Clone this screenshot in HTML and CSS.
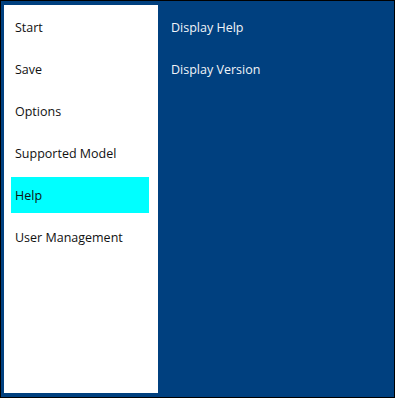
FILE: index.html
```html
<!DOCTYPE html>
<html>
<head>
<meta charset="utf-8">
<link rel="stylesheet" href="styles.css">
</head>
<body>
<div class="frame">
  <nav class="sidebar">
    <div class="item">Start</div>
    <div class="item">Save</div>
    <div class="item">Options</div>
    <div class="item">Supported Model</div>
    <div class="item active">Help</div>
    <div class="item">User Management</div>
  </nav>
  <main class="content">
    <div class="item">Display Help</div>
    <div class="item">Display Version</div>
  </main>
</div>
</body>
</html>
```
FILE: styles.css
```css
html, body {
  margin: 0;
  padding: 0;
}
body {
  font-family: "Open Sans", "Noto Sans", sans-serif;
  font-size: 12.5px;
}
.frame {
  box-sizing: border-box;
  width: 395px;
  height: 398px;
  border: 1px solid #000;
  background: #00407f;
  padding: 4px 0 4px 3px;
  display: flex;
}
.sidebar {
  box-sizing: border-box;
  width: 154px;
  background: #fff;
  padding: 4px 9px 0 7px;
  display: flex;
  flex-direction: column;
  gap: 6px;
  color: #111;
}
.content {
  flex: 1;
  padding: 4px 0 0 9px;
  display: flex;
  flex-direction: column;
  gap: 6px;
  color: #f0f4f8;
}
.item {
  height: 36px;
  display: flex;
  align-items: center;
  padding-left: 4px;
}
.active {
  background: #00ffff;
}
```
